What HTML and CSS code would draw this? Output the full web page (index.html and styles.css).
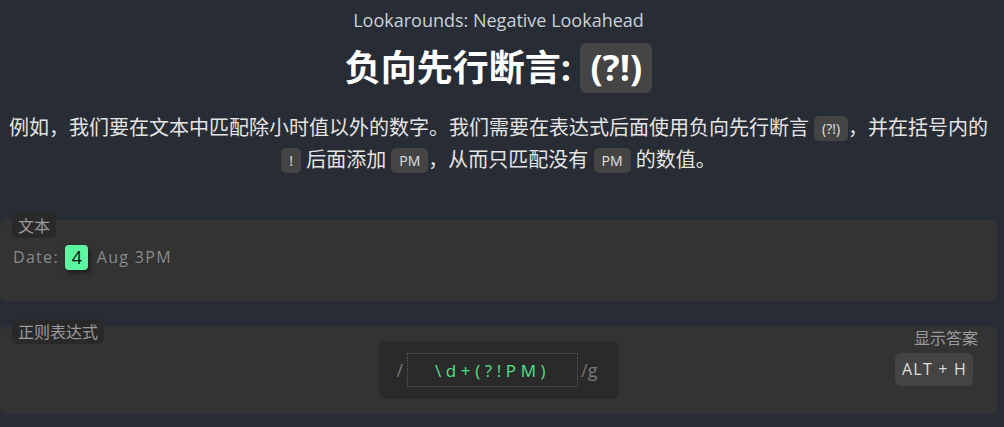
FILE: index.html
```html
<!DOCTYPE html>
<html lang="zh">
<head>
<meta charset="utf-8">
<link rel="stylesheet" href="styles.css">
</head>
<body>
<div class="page">
  <header class="head">
    <div class="sub">Lookarounds: Negative Lookahead</div>
    <h1 class="title">负向先行断言: <code class="tcode">(?!)</code></h1>
    <p class="desc">例如，我们要在文本中匹配除小时值以外的数字。我们需要在表达式后面使用负向先行断言 <code class="ic">(?!)</code>，并在括号内的 <code class="ic">!</code> 后面添加 <code class="ic">PM</code>，从而只匹配没有 <code class="ic">PM</code> 的数值。</p>
  </header>

  <section class="panel panel-text">
    <span class="label">文本</span>
    <div class="sample">Date: <mark class="hit">4</mark> Aug 3PM</div>
  </section>

  <section class="panel panel-regex">
    <span class="label">正则表达式</span>
    <div class="regex-box">
      <span class="slash">/</span>
      <span class="regex-input">\d+(?!PM)</span>
      <span class="flags">/g</span>
    </div>
    <div class="answer">
      <span class="answer-title">显示答案</span>
      <span class="kbd">ALT + H</span>
    </div>
  </section>
</div>
</body>
</html>
```

FILE: styles.css
```css
html, body {
  margin: 0;
  padding: 0;
  background: #282c34;
}
body {
  font-family: "Open Sans", "Noto Sans CJK SC", sans-serif;
  color: #e6e6e6;
}
.page {
  width: 997px;
}
.head {
  text-align: center;
  padding-top: 8px;
}
.sub {
  font-size: 18px;
  line-height: 24px;
  color: #c9d1d9;
}
.title {
  margin: 11px 0 0;
  font-size: 36px;
  line-height: 50px;
  font-weight: 700;
  color: #ffffff;
  font-family: "Open Sans", "Noto Sans CJK SC", sans-serif;
}
.tcode {
  display: inline-block;
  font-family: "Open Sans", sans-serif;
  font-size: 36px;
  line-height: 50px;
  padding: 0 10px;
  background: #444444;
  border-radius: 6px;
  vertical-align: top;
}
.desc {
  margin: 19px 0 0;
  font-size: 20px;
  line-height: 32px;
  color: #e4e4e4;
  font-family: "Open Sans", "Noto Sans CJK SC", sans-serif;
}
.ic {
  display: inline-block;
  font-family: "Open Sans", sans-serif;
  font-size: 14px;
  line-height: 25px;
  padding: 0 8px;
  background: #444444;
  border-radius: 5px;
  color: #e0e0e0;
  vertical-align: 1px;
}
.panel {
  position: relative;
  background: #333333;
  border-radius: 6px;
}
.panel-text {
  margin-top: 44px;
  height: 81px;
}
.panel-regex {
  margin-top: 25px;
  height: 88px;
  display: flex;
  justify-content: center;
  align-items: flex-start;
}
.label {
  position: absolute;
  left: 12px;
  top: -7px;
  padding: 0 6px;
  height: 25px;
  line-height: 24px;
  font-size: 16px;
  color: #9a9a9a;
  background: #292929;
  border-radius: 5px;
  font-family: "Noto Sans CJK SC", sans-serif;
}
.sample {
  padding: 25px 0 0 13px;
  font-size: 16px;
  line-height: 25px;
  letter-spacing: 1.3px;
  color: #8a8a8a;
}
.hit {
  display: inline-block;
  background: #5cf5a0;
  color: #111;
  font-size: 18px;
  line-height: 25px;
  width: 23px;
  text-align: center;
  letter-spacing: 0;
  border-radius: 4px;
  margin: 0 3px 0 1px;
  box-shadow: 2px 3px 5px rgba(0,0,0,0.45);
  vertical-align: top;
}
.regex-box {
  margin-top: 15px;
  width: 240px;
  height: 58px;
  box-sizing: border-box;
  background: #2a2a2a;
  border-radius: 7px;
  display: flex;
  align-items: center;
  padding: 0 0 0 18px;
}
.slash, .flags {
  color: #777777;
  font-size: 18px;
}
.regex-input {
  margin-left: 4px;
  width: 171px;
  height: 34px;
  box-sizing: border-box;
  border: 1px dotted #5a5a5a;
  display: flex;
  align-items: center;
  justify-content: center;
  color: #4ee08a;
  font-size: 17px;
  letter-spacing: 4.6px;
}
.flags {
  margin-left: 3px;
}
.answer {
  position: absolute;
  right: 24px;
  top: 1px;
  display: flex;
  flex-direction: column;
  align-items: flex-end;
}
.answer-title {
  font-size: 16px;
  line-height: 20px;
  color: #9a9a9a;
  font-family: "Noto Sans CJK SC", sans-serif;
  margin-right: -5px;
}
.kbd {
  margin-top: 6px;
  background: #444444;
  color: #dddddd;
  font-size: 16px;
  letter-spacing: 1.2px;
  height: 33px;
  line-height: 33px;
  padding: 0 6px 0 7px;
  border-radius: 6px;
}
```
